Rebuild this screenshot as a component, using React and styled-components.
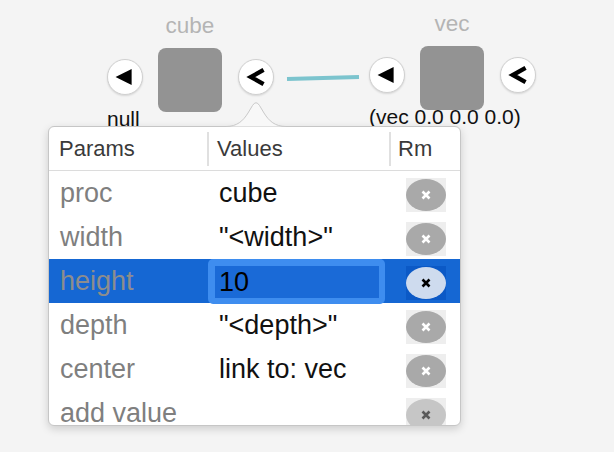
import React from 'react';
import styled, { createGlobalStyle } from 'styled-components';

const GlobalStyle = createGlobalStyle`
    html, body {
        margin: 0;
        padding: 0;
        background: #f4f4f4;
    }
    body {
        font-family: "Liberation Sans", Arial, sans-serif;
    }
`;

const Canvas = styled.div`
    position: relative;
    width: 614px;
    height: 452px;
    overflow: hidden;
    background: #f4f4f4;
`;

/* ---------- graph nodes ---------- */

const Node = styled.div`
    position: absolute;
    left: ${ p => p.x }px;
    top: ${ p => p.y }px;
    display: flex;
    flex-direction: column;
`;

const NodeRow = styled.div`
    display: flex;
    align-items: flex-end;
`;

const NodeBody = styled.div`
    display: flex;
    flex-direction: column;
    align-items: center;
    margin: 0 16px 0 15px;
`;

const NodeLabel = styled.div`
    font-size: 22.5px;
    line-height: 26px;
    color: #b4b4b4;
    margin-bottom: 9px;
`;

const NodeBox = styled.div`
    width: 64px;
    height: 64px;
    border-radius: 8px;
    background: #939393;
`;

const Port = styled.div`
    width: 36px;
    height: 36px;
    margin-bottom: 17px;
    border-radius: 50%;
    background: #fff;
    border: 1px solid #d0d0d0;
    box-shadow: 0 1px 2px rgba(0, 0, 0, 0.12);
    display: flex;
    align-items: center;
    justify-content: center;
    box-sizing: border-box;
`;

const Caption = styled.div`
    font-size: 21px;
    line-height: 24px;
    color: #111;
    margin-top: -5px;
    white-space: nowrap;
`;

const Wire = styled.svg`
    position: absolute;
    left: 0;
    top: 0;
    pointer-events: none;
`;

const InIcon = () => (
    <svg width='36' height='36' viewBox='0 0 36 36'>
        <polygon points='8,18 25,9.5 25,26.5' fill='#000'/>
    </svg>
);

const OutIcon = () => (
    <svg width='36' height='36' viewBox='0 0 36 36'>
        <polyline points='26,10.5 12.5,18 26,25.5' fill='none' stroke='#000' strokeWidth='4.6' strokeLinejoin='miter'/>
    </svg>
);

const GraphNode = ({ x, y, label, caption }) => (
    <Node x={ x } y={ y }>
        <NodeRow>
            <Port><InIcon/></Port>
            <NodeBody>
                <NodeLabel>{ label }</NodeLabel>
                <NodeBox/>
            </NodeBody>
            <Port><OutIcon/></Port>
        </NodeRow>
        <Caption>{ caption }</Caption>
    </Node>
);

/* ---------- popover ---------- */

const Popover = styled.div`
    position: absolute;
    left: 48px;
    top: 126px;
    width: 413px;
    height: 300px;
`;

const Arrow = styled.svg`
    position: absolute;
    left: 178px;
    top: -27px;
`;

const Panel = styled.div`
    width: 100%;
    height: 100%;
    box-sizing: border-box;
    background: #fff;
    border: 1px solid #c6c6c6;
    border-radius: 6px;
    box-shadow: 0 3px 9px rgba(0, 0, 0, 0.16);
    overflow: hidden;
`;

const COLUMNS = '158px 182px 1fr';

const HeaderRow = styled.div`
    display: grid;
    grid-template-columns: ${ COLUMNS };
    align-items: center;
    height: 44px;
    box-sizing: border-box;
    border-bottom: 1px solid #dcdcdc;
`;

const HeaderCell = styled.div`
    height: 34px;
    display: flex;
    align-items: center;
    box-sizing: border-box;
    padding-left: ${ p => p.pad }px;
    border-left: ${ p => p.sep ? '2px solid #e0e0e0' : 'none' };
    font-size: 22px;
    color: #3a3a3a;
`;

const Row = styled.div`
    display: grid;
    grid-template-columns: ${ COLUMNS };
    align-items: center;
    height: 44px;
    background: ${ p => p.selected ? '#1567d3' : 'transparent' };
    font-size: 27px;
`;

const ParamCell = styled.div`
    padding-left: 11px;
    color: ${ p => p.selected ? '#8d8d8d' : '#7f7f7f' };
    white-space: nowrap;
`;

const ValueCell = styled.div`
    padding-left: 12px;
    color: #111;
    white-space: nowrap;
`;

const Field = styled.div`
    margin-left: 1px;
    width: 177px;
    box-sizing: border-box;
    padding: 7px 6px 6px 7px;
    border-radius: 5px;
    background: #3e8def;
`;

const FieldInput = styled.input`
    display: block;
    width: 164px;
    height: 32px;
    box-sizing: border-box;
    margin: 0;
    padding: 0 0 0 4px;
    border: none;
    outline: none;
    background: #1a6ad7;
    font-family: inherit;
    font-size: 27px;
    color: #000;
`;

const RmCell = styled.div`
    display: flex;
    justify-content: center;
    padding-left: 2px;
`;

const RmSquare = styled.div`
    width: 40px;
    height: 34px;
    margin-top: 3px;
    display: flex;
    align-items: center;
    justify-content: center;
    background: ${ p => p.selected ? '#0b59c6' : '#eeeeee' };
`;

const RmPill = styled.div`
    width: 40px;
    height: 32px;
    border-radius: 50%;
    display: flex;
    align-items: center;
    justify-content: center;
    background: ${ p => p.selected ? '#cedbee' : p.muted ? '#c6c6c6' : '#a9a9a9' };
`;

const Cross = ({ color }) => (
    <svg width='12' height='12' viewBox='0 0 12 12'>
        <path d='M2.5 2.5 L9.5 9.5 M9.5 2.5 L2.5 9.5' stroke={ color } strokeWidth='2.6' strokeLinecap='butt'/>
    </svg>
);

const RemoveButton = ({ selected, muted }) => (
    <RmCell>
        <RmSquare selected={ selected }>
            <RmPill selected={ selected } muted={ muted }>
                <Cross color={ selected ? '#000' : muted ? '#5a5a5a' : '#fff' }/>
            </RmPill>
        </RmSquare>
    </RmCell>
);

const params = [
    { name: 'proc', value: 'cube' },
    { name: 'width', value: '"<width>"' },
    { name: 'height', value: '10', editing: true },
    { name: 'depth', value: '"<depth>"' },
    { name: 'center', value: 'link to: vec' },
    { name: 'add value', value: '', muted: true },
];

const App = () => (
    <Canvas>
        <GlobalStyle/>
        <GraphNode x={ 107 } y={ 13 } label='cube' caption='null'/>
        <GraphNode x={ 369 } y={ 11 } label='vec' caption='(vec 0.0 0.0 0.0)'/>
        <Wire width='614' height='452'>
            <line x1='287' y1='79' x2='359' y2='77' stroke='#7cc4ce' strokeWidth='4'/>
        </Wire>
        <Popover>
            <Panel>
                <HeaderRow>
                    <HeaderCell pad={ 10 }>Params</HeaderCell>
                    <HeaderCell sep pad={ 8 }>Values</HeaderCell>
                    <HeaderCell sep pad={ 7 }>Rm</HeaderCell>
                </HeaderRow>
                { params.map(item => (
                    <Row key={ item.name } selected={ item.editing }>
                        <ParamCell selected={ item.editing }>{ item.name }</ParamCell>
                        { item.editing
                            ? <Field><FieldInput readOnly value={ item.value }/></Field>
                            : <ValueCell>{ item.value }</ValueCell> }
                        <RemoveButton selected={ item.editing } muted={ item.muted }/>
                    </Row>
                )) }
            </Panel>
            <Arrow width='62' height='28' viewBox='0 0 62 28'>
                <path d='M0 27.5 C11 27.5 17 22 22 14 L26.5 6.5 Q30 1 33.5 6.5 L38 14 C43 22 49 27.5 60 27.5 Z' fill='#f8f8f8'/>
                <path d='M0 27.5 C11 27.5 17 22 22 14 L26.5 6.5 Q30 1 33.5 6.5 L38 14 C43 22 49 27.5 60 27.5' fill='none' stroke='#c9c9c9' strokeWidth='1'/>
            </Arrow>
        </Popover>
    </Canvas>
);

export default App;
